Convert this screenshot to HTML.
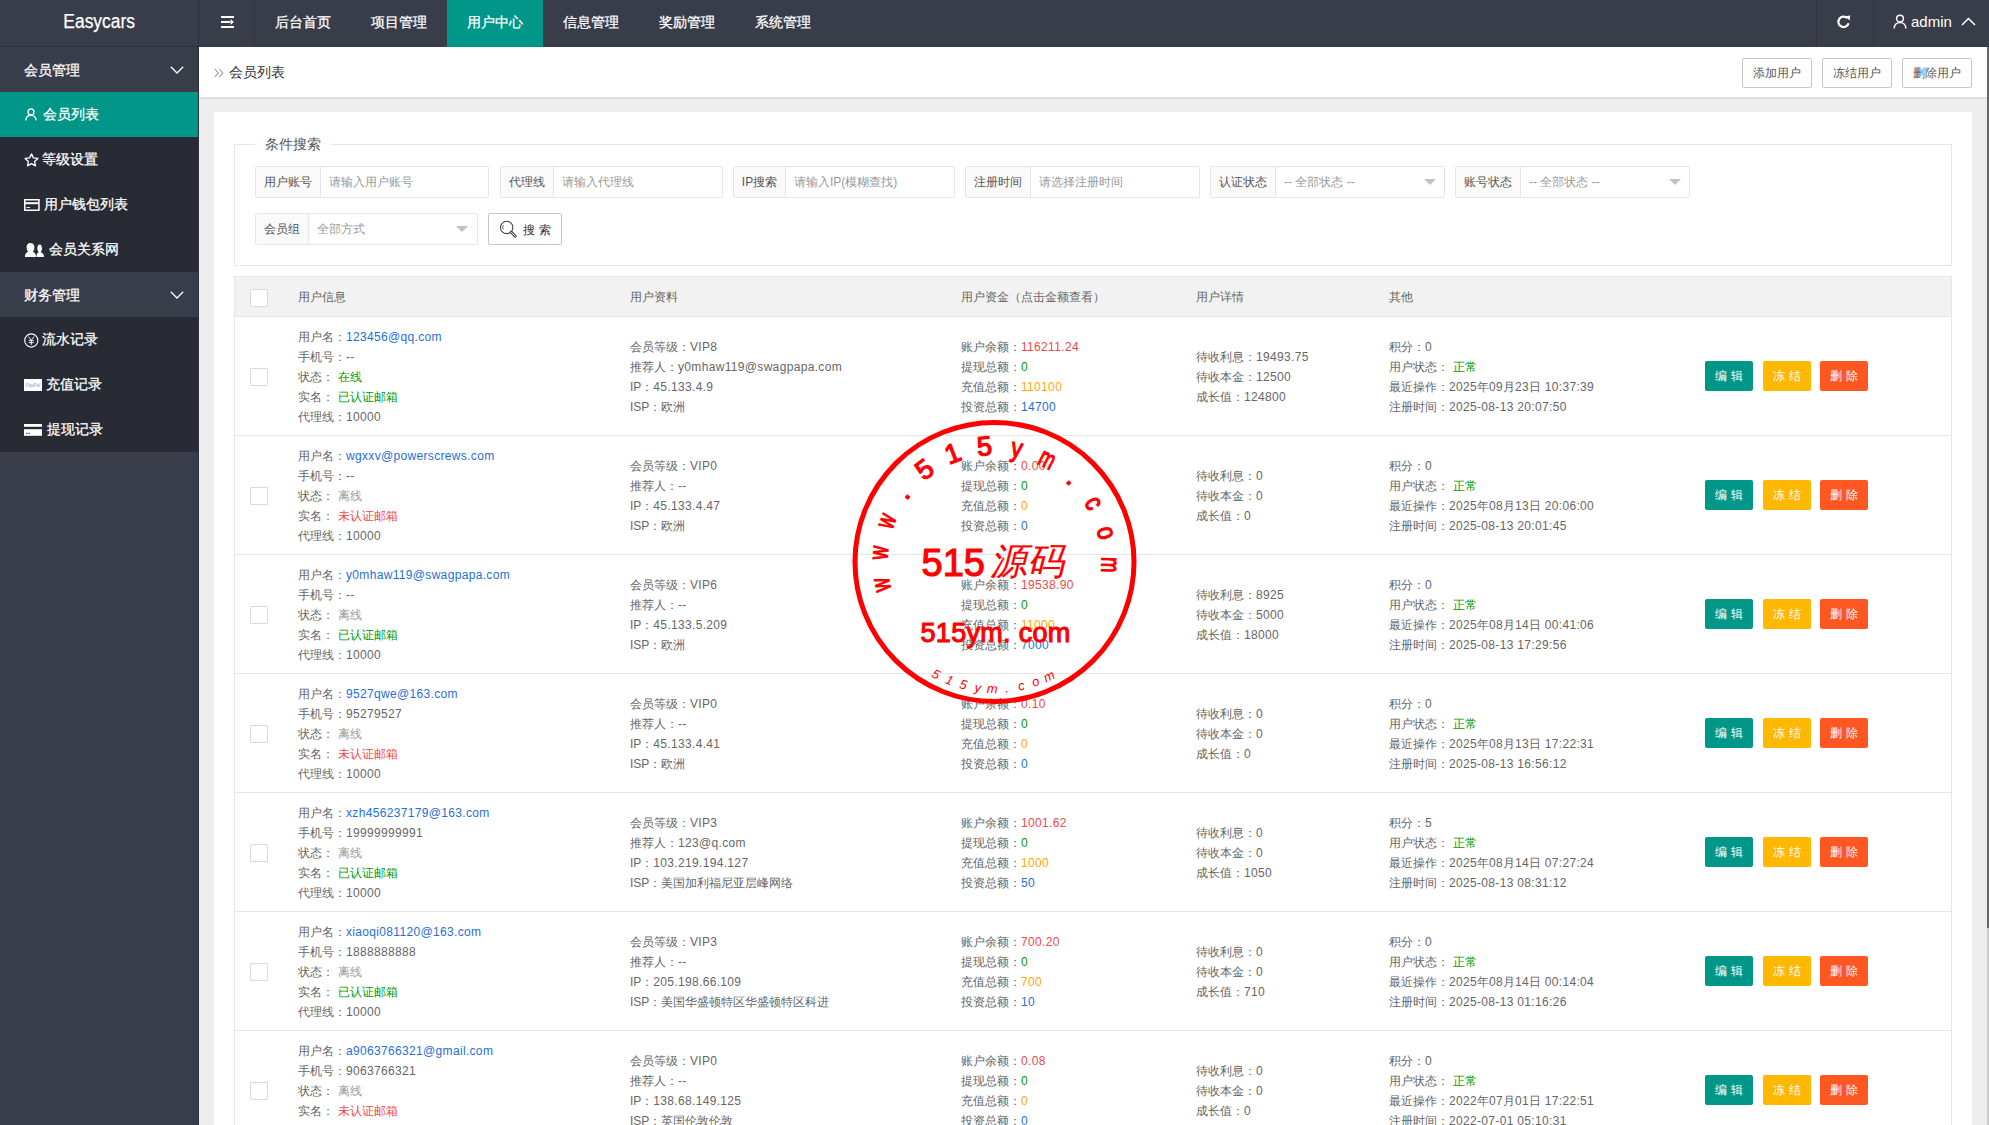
<!DOCTYPE html>
<html><head><meta charset="utf-8">
<style>
*{box-sizing:border-box;margin:0;padding:0}
html,body{width:1989px;height:1125px;overflow:hidden;background:#eee;font-family:"Liberation Sans",sans-serif;font-size:12px;color:#666}
.abs{position:absolute}
#top{left:0;top:0;width:1989px;height:47px;background:#393D49}
#logo{left:0;top:0;width:199px;height:47px;border-bottom:1px solid #2E313B;border-right:1px solid #2E313B;color:#fff;font-size:20px;text-align:center;line-height:43px}
.tsep{top:0;width:1px;height:47px;background:#30333D}
.nav{top:0;height:47px;width:96px;color:#fff;font-size:14px;text-align:center;line-height:45px}
.nav.on{background:#009688}
.nav,.mh,.mi span,#logo{-webkit-text-stroke:0.25px #fff}
#side{left:0;top:47px;width:199px;height:1078px;background:#393D49;border-right:1px solid #2E313B}
.mh{position:absolute;left:0;width:198px;height:45px;color:#fff;font-size:14px;line-height:46px;padding-left:24px;background:#393D49}
.mc{position:absolute;left:0;width:198px;background:#282B33}
.mi{height:45px;color:#fff;font-size:14px;line-height:45px;padding-left:24px;position:relative}
.mi.on{background:#009688}
.mi svg{position:absolute}
#crumb{left:199px;top:47px;width:1788px;height:50px;background:#fff;box-shadow:0 1px 3px rgba(0,0,0,.12)}
.tbtn{top:58px;width:70px;height:30px;border:1px solid #C9C9C9;border-radius:2px;background:#fff;color:#555;font-size:12px;text-align:center;line-height:28px}
#card{left:214px;top:112px;width:1758px;height:1013px;background:#fff}

#fs{left:234px;top:144px;width:1718px;height:122px;border:1px solid #E6E6E6}
#legend{left:255px;top:134px;width:76px;height:20px;background:#fff;color:#555;font-size:14px;line-height:20px;padding-left:10px}
.ig{position:absolute;height:32px;border:1px solid #E6E6E6;border-radius:2px;background:#fff}
.ig .lb{position:absolute;left:0;top:0;height:30px;background:#FAFAFA;border-right:1px solid #E6E6E6;color:#555;line-height:30px;text-align:center}
.ig .ph{position:absolute;top:0;line-height:30px;color:#999;padding-left:8px}
.ig .ar{position:absolute;top:12px;width:0;height:0;border-left:6px solid transparent;border-right:6px solid transparent;border-top:6px solid #C2C2C2}
#sbtn{left:488px;top:213px;width:74px;height:32px;border:1px solid #C9C9C9;border-radius:2px;color:#333;line-height:30px}

#thead{left:234px;top:276px;width:1718px;height:41px;background:#F2F2F2;border:1px solid #E6E6E6}
.th{position:absolute;top:10px;line-height:20px;color:#666}
.row{left:234px;width:1718px;height:119px;border-left:1px solid #E6E6E6;border-right:1px solid #E6E6E6;border-bottom:1px solid #E6E6E6;background:#fff}
.cb{position:absolute;width:18px;height:18px;border:1px solid #DADADA;border-radius:1px;background:#fff}
.col{position:absolute;line-height:20px;white-space:nowrap;color:#666}
.col b.l{font-weight:normal;letter-spacing:0.33px}
.col .b{color:#1E6FD9}.col .g{color:#009900}.col .r{color:#F04848}.col .o{color:#FFA800}.col .h{color:#999}
.sp{display:inline-block;width:4px}
.ob{position:absolute;top:44px;width:48px;height:30px;border-radius:2px;color:#fff;text-align:center;line-height:30px;letter-spacing:4px;text-indent:4px}
#stamp{font-family:"Liberation Sans",sans-serif}
#scroll{left:1987px;top:47px;width:2px;height:1078px;background:#ccc}
#thumb{left:1987px;top:47px;width:2px;height:881px;background:#666}
</style></head><body>
<!-- top bar -->
<div id="top" class="abs"></div>
<div id="logo" class="abs"><span style="display:inline-block;transform:scaleX(0.87)">Easycars</span></div>
<div class="abs tsep" style="left:254px"></div>
<svg class="abs" style="left:221px;top:16px" width="14" height="12" viewBox="0 0 14 12"><rect x="0" y="0" width="13" height="2" fill="#fff"/><rect x="0" y="5" width="9" height="2" fill="#fff"/><rect x="0" y="10" width="13" height="2" fill="#fff"/><path d="M9.5 3.2 L13 6 L9.5 8.8 Z" fill="#fff"/></svg>
<div class="abs nav" style="left:255px">后台首页</div>
<div class="abs nav" style="left:351px">项目管理</div>
<div class="abs nav on" style="left:447px">用户中心</div>
<div class="abs nav" style="left:543px">信息管理</div>
<div class="abs nav" style="left:639px">奖励管理</div>
<div class="abs nav" style="left:735px">系统管理</div>
<div class="abs tsep" style="left:1816px"></div>
<div class="abs tsep" style="left:1873px"></div>
<!-- refresh -->
<svg class="abs" style="left:1836px;top:14px" width="16" height="16" viewBox="0 0 16 16"><path d="M12.6 9.2 A5.2 5.2 0 1 1 11.2 4.1" fill="none" stroke="#fff" stroke-width="2.2"/><path d="M9.2 2.2 L14.2 1.6 L13.6 6.6 Z" fill="#fff"/></svg>
<!-- user -->
<svg class="abs" style="left:1893px;top:14px" width="14" height="15" viewBox="0 0 14 15"><circle cx="7" cy="4.6" r="3.4" fill="none" stroke="#fff" stroke-width="1.4"/><path d="M1.2 14.5 C1.2 10.5 3.8 8.6 7 8.6 C10.2 8.6 12.8 10.5 12.8 14.5" fill="none" stroke="#fff" stroke-width="1.4"/></svg>
<div class="abs" style="left:1911px;top:12px;color:#fff;font-size:15px;line-height:20px">admin</div>
<svg class="abs" style="left:1961px;top:17px" width="15" height="9" viewBox="0 0 15 9"><path d="M1 8 L7.5 1.5 L14 8" fill="none" stroke="#fff" stroke-width="1.5"/></svg>

<!-- sidebar -->
<div id="side" class="abs">
  <div class="mh" style="top:0">会员管理<svg style="position:absolute;left:170px;top:19px" width="14" height="8" viewBox="0 0 14 8"><path d="M0.8 0.8 L7 7 L13.2 0.8" fill="none" stroke="#fff" stroke-width="1.3"/></svg></div>
  <div class="mc" style="top:45px">
    <div class="mi on"><svg style="left:25px;top:16px" width="12" height="13" viewBox="0 0 12 13"><circle cx="6" cy="3.9" r="3" fill="none" stroke="#fff" stroke-width="1.3"/><path d="M0.8 12.6 C0.8 9.2 3 7.4 6 7.4 C9 7.4 11.2 9.2 11.2 12.6" fill="none" stroke="#fff" stroke-width="1.3"/></svg><span style="padding-left:19px">会员列表</span></div>
    <div class="mi"><svg style="left:24px;top:16px" width="15" height="14" viewBox="0 0 15 14"><path d="M7.5 0.9 L9.4 4.9 L13.9 5.4 L10.6 8.4 L11.5 12.9 L7.5 10.6 L3.5 12.9 L4.4 8.4 L1.1 5.4 L5.6 4.9 Z" fill="none" stroke="#fff" stroke-width="1.3" stroke-linejoin="round"/></svg><span style="padding-left:18px">等级设置</span></div>
    <div class="mi"><svg style="left:24px;top:17px" width="16" height="12" viewBox="0 0 16 12"><rect x="0.75" y="0.75" width="14.2" height="10.5" fill="none" stroke="#fff" stroke-width="1.5"/><rect x="0.75" y="3.2" width="14.2" height="2" fill="#fff"/><rect x="2.5" y="8" width="3.5" height="1" fill="#fff"/></svg><span style="padding-left:20px">用户钱包列表</span></div>
    <div class="mi"><svg style="left:25px;top:16px" width="19" height="14" viewBox="0 0 19 14"><path d="M11.5 14 L19 14 C19 11 17.5 10 15.5 9.3 C16.6 8.3 17 7 17 5.2 C17 3 16 1.4 14.6 1.4 C13.3 1.4 12.3 2.9 12.3 5 C12.3 7 12.9 8.4 13.8 9.3 C12.4 9.8 11.5 10.8 11.5 14 Z" fill="#fff"/><path d="M0 14 L11 14 C11 10.8 9.8 9.6 7.6 8.8 C8.8 7.8 9.4 6.2 9.4 4.2 C9.4 1.8 8 0 5.5 0 C3 0 1.6 1.8 1.6 4.2 C1.6 6.2 2.2 7.8 3.4 8.8 C1.2 9.6 0 10.8 0 14 Z" fill="#fff"/></svg><span style="padding-left:25px">会员关系网</span></div>
  </div>
  <div class="mh" style="top:225px">财务管理<svg style="position:absolute;left:170px;top:19px" width="14" height="8" viewBox="0 0 14 8"><path d="M0.8 0.8 L7 7 L13.2 0.8" fill="none" stroke="#fff" stroke-width="1.3"/></svg></div>
  <div class="mc" style="top:270px">
    <div class="mi"><svg style="left:24px;top:16px" width="15" height="15" viewBox="0 0 15 15"><circle cx="7.3" cy="7.5" r="6.6" fill="none" stroke="#fff" stroke-width="1.1"/><path d="M4.5 3.6 L7.3 7.2 L10.1 3.6 M7.3 7.2 L7.3 11.8 M4.8 7.6 L9.8 7.6 M4.8 9.6 L9.8 9.6" fill="none" stroke="#fff" stroke-width="0.9"/></svg><span style="padding-left:18px">流水记录</span></div>
    <div class="mi"><svg style="left:24px;top:17px" width="18" height="12" viewBox="0 0 18 12"><rect x="0" y="0" width="18" height="12" fill="#fff"/><text x="9" y="7.6" font-size="4.5" font-style="italic" text-anchor="middle" fill="#8aa0c8" font-family="Liberation Sans">PayPal</text></svg><span style="padding-left:22px">充值记录</span></div>
    <div class="mi"><svg style="left:24px;top:16px" width="18" height="13" viewBox="0 0 18 13"><rect x="0" y="1" width="18" height="2.8" fill="#fff"/><rect x="0" y="6.2" width="18" height="6.6" fill="#fff"/><rect x="2" y="9.8" width="1.5" height="1" fill="#282B33"/><rect x="4.3" y="9.8" width="1.5" height="1" fill="#282B33"/></svg><span style="padding-left:23px">提现记录</span></div>
  </div>
</div>

<!-- crumb -->
<div id="crumb" class="abs"></div>
<svg class="abs" style="left:214px;top:68px" width="10" height="10" viewBox="0 0 10 10"><path d="M0.8 1 L4.3 5 L0.8 9 M5.3 1 L8.8 5 L5.3 9" fill="none" stroke="#999" stroke-width="1.1"/></svg>
<div class="abs" style="left:229px;top:62px;color:#333;font-size:14px;line-height:20px">会员列表</div>
<div class="abs tbtn" style="left:1742px">添加用户</div>
<div class="abs tbtn" style="left:1822px">冻结用户</div>
<div class="abs tbtn" style="left:1902px">删除用户</div>

<div id="card" class="abs"></div>

<div id="fs" class="abs"></div>
<div id="legend" class="abs">条件搜索</div>
<div class="ig" style="left:255px;top:166px;width:234px"><div class="lb" style="width:65px">用户账号</div><div class="ph" style="left:65px">请输入用户账号</div></div>
<div class="ig" style="left:500px;top:166px;width:223px"><div class="lb" style="width:53px">代理线</div><div class="ph" style="left:53px">请输入代理线</div></div>
<div class="ig" style="left:733px;top:166px;width:222px"><div class="lb" style="width:52px">IP搜索</div><div class="ph" style="left:52px">请输入IP(模糊查找)</div></div>
<div class="ig" style="left:965px;top:166px;width:235px"><div class="lb" style="width:65px">注册时间</div><div class="ph" style="left:65px">请选择注册时间</div></div>
<div class="ig" style="left:1210px;top:166px;width:235px"><div class="lb" style="width:65px">认证状态</div><div class="ph" style="left:65px">-- 全部状态 --</div><div class="ar" style="left:213px"></div></div>
<div class="ig" style="left:1455px;top:166px;width:235px"><div class="lb" style="width:65px">账号状态</div><div class="ph" style="left:65px">-- 全部状态 --</div><div class="ar" style="left:213px"></div></div>
<div class="ig" style="left:255px;top:213px;width:223px"><div class="lb" style="width:53px">会员组</div><div class="ph" style="left:53px">全部方式</div><div class="ar" style="left:200px"></div></div>
<div id="sbtn" class="abs"><svg style="position:absolute;left:-1px;top:-1px" width="72" height="30" viewBox="0 0 72 30"><circle cx="18.7" cy="14.4" r="6.2" fill="none" stroke="#444" stroke-width="1.1"/><path d="M15.3 12.2 A3.8 3.8 0 0 0 15.3 16.4" fill="none" stroke="#444" stroke-width="0.9"/><path d="M23.2 19 L27.3 23.3" stroke="#444" stroke-width="2.8" stroke-linecap="round"/><path d="M23.4 19.3 L27.1 23" stroke="#fff" stroke-width="1" stroke-linecap="round"/></svg><span style="position:absolute;left:34px;top:1px;letter-spacing:4px">搜索</span></div>
<!--TABLE-->
<div class="abs" id="thead"><div class="cb" style="left:15px;top:12px"></div><div class="th" style="left:63px">用户信息</div><div class="th" style="left:395px">用户资料</div><div class="th" style="left:726px">用户资金（点击金额查看）</div><div class="th" style="left:961px">用户详情</div><div class="th" style="left:1154px">其他</div></div>
<div class="row abs" style="top:317px"><div class="cb" style="left:15px;top:51px"></div><div class="col" style="left:63px;top:10px">用户名：<span class="b"><b class="l">123456@qq.com</b></span><br>手机号：<b class="l">--</b><br>状态：<i class="sp"></i><span class="g">在线</span><br>实名：<i class="sp"></i><span class="g">已认证邮箱</span><br>代理线：<b class="l">10000</b></div><div class="col" style="left:395px;top:20px">会员等级：<b class="l">VIP8</b><br>推荐人：<b class="l">y0mhaw119@swagpapa.com</b><br>IP：<b class="l">45.133.4.9</b><br>ISP：欧洲</div><div class="col" style="left:726px;top:20px">账户余额：<span class="r"><b class="l">116211.24</b></span><br>提现总额：<span class="g"><b class="l">0</b></span><br>充值总额：<span class="o"><b class="l">110100</b></span><br>投资总额：<span class="b"><b class="l">14700</b></span></div><div class="col" style="left:961px;top:30px">待收利息：<b class="l">19493.75</b><br>待收本金：<b class="l">12500</b><br>成长值：<b class="l">124800</b></div><div class="col" style="left:1154px;top:20px">积分：<b class="l">0</b><br>用户状态：<i class="sp"></i><span class="g">正常</span><br>最近操作：<b class="l">2025</b>年<b class="l">09</b>月<b class="l">23</b>日<b class="l"> 10:37:39</b><br>注册时间：<b class="l">2025-08-13 20:07:50</b></div><div class="ob" style="left:1470px;background:#009688">编辑</div><div class="ob" style="left:1528px;background:#FFB800">冻结</div><div class="ob" style="left:1585px;background:#FF5722">删除</div></div>
<div class="row abs" style="top:436px"><div class="cb" style="left:15px;top:51px"></div><div class="col" style="left:63px;top:10px">用户名：<span class="b"><b class="l">wgxxv@powerscrews.com</b></span><br>手机号：<b class="l">--</b><br>状态：<i class="sp"></i><span class="h">离线</span><br>实名：<i class="sp"></i><span class="r">未认证邮箱</span><br>代理线：<b class="l">10000</b></div><div class="col" style="left:395px;top:20px">会员等级：<b class="l">VIP0</b><br>推荐人：<b class="l">--</b><br>IP：<b class="l">45.133.4.47</b><br>ISP：欧洲</div><div class="col" style="left:726px;top:20px">账户余额：<span class="r"><b class="l">0.00</b></span><br>提现总额：<span class="g"><b class="l">0</b></span><br>充值总额：<span class="o"><b class="l">0</b></span><br>投资总额：<span class="b"><b class="l">0</b></span></div><div class="col" style="left:961px;top:30px">待收利息：<b class="l">0</b><br>待收本金：<b class="l">0</b><br>成长值：<b class="l">0</b></div><div class="col" style="left:1154px;top:20px">积分：<b class="l">0</b><br>用户状态：<i class="sp"></i><span class="g">正常</span><br>最近操作：<b class="l">2025</b>年<b class="l">08</b>月<b class="l">13</b>日<b class="l"> 20:06:00</b><br>注册时间：<b class="l">2025-08-13 20:01:45</b></div><div class="ob" style="left:1470px;background:#009688">编辑</div><div class="ob" style="left:1528px;background:#FFB800">冻结</div><div class="ob" style="left:1585px;background:#FF5722">删除</div></div>
<div class="row abs" style="top:555px"><div class="cb" style="left:15px;top:51px"></div><div class="col" style="left:63px;top:10px">用户名：<span class="b"><b class="l">y0mhaw119@swagpapa.com</b></span><br>手机号：<b class="l">--</b><br>状态：<i class="sp"></i><span class="h">离线</span><br>实名：<i class="sp"></i><span class="g">已认证邮箱</span><br>代理线：<b class="l">10000</b></div><div class="col" style="left:395px;top:20px">会员等级：<b class="l">VIP6</b><br>推荐人：<b class="l">--</b><br>IP：<b class="l">45.133.5.209</b><br>ISP：欧洲</div><div class="col" style="left:726px;top:20px">账户余额：<span class="r"><b class="l">19538.90</b></span><br>提现总额：<span class="g"><b class="l">0</b></span><br>充值总额：<span class="o"><b class="l">11000</b></span><br>投资总额：<span class="b"><b class="l">7000</b></span></div><div class="col" style="left:961px;top:30px">待收利息：<b class="l">8925</b><br>待收本金：<b class="l">5000</b><br>成长值：<b class="l">18000</b></div><div class="col" style="left:1154px;top:20px">积分：<b class="l">0</b><br>用户状态：<i class="sp"></i><span class="g">正常</span><br>最近操作：<b class="l">2025</b>年<b class="l">08</b>月<b class="l">14</b>日<b class="l"> 00:41:06</b><br>注册时间：<b class="l">2025-08-13 17:29:56</b></div><div class="ob" style="left:1470px;background:#009688">编辑</div><div class="ob" style="left:1528px;background:#FFB800">冻结</div><div class="ob" style="left:1585px;background:#FF5722">删除</div></div>
<div class="row abs" style="top:674px"><div class="cb" style="left:15px;top:51px"></div><div class="col" style="left:63px;top:10px">用户名：<span class="b"><b class="l">9527qwe@163.com</b></span><br>手机号：<b class="l">95279527</b><br>状态：<i class="sp"></i><span class="h">离线</span><br>实名：<i class="sp"></i><span class="r">未认证邮箱</span><br>代理线：<b class="l">10000</b></div><div class="col" style="left:395px;top:20px">会员等级：<b class="l">VIP0</b><br>推荐人：<b class="l">--</b><br>IP：<b class="l">45.133.4.41</b><br>ISP：欧洲</div><div class="col" style="left:726px;top:20px">账户余额：<span class="r"><b class="l">0.10</b></span><br>提现总额：<span class="g"><b class="l">0</b></span><br>充值总额：<span class="o"><b class="l">0</b></span><br>投资总额：<span class="b"><b class="l">0</b></span></div><div class="col" style="left:961px;top:30px">待收利息：<b class="l">0</b><br>待收本金：<b class="l">0</b><br>成长值：<b class="l">0</b></div><div class="col" style="left:1154px;top:20px">积分：<b class="l">0</b><br>用户状态：<i class="sp"></i><span class="g">正常</span><br>最近操作：<b class="l">2025</b>年<b class="l">08</b>月<b class="l">13</b>日<b class="l"> 17:22:31</b><br>注册时间：<b class="l">2025-08-13 16:56:12</b></div><div class="ob" style="left:1470px;background:#009688">编辑</div><div class="ob" style="left:1528px;background:#FFB800">冻结</div><div class="ob" style="left:1585px;background:#FF5722">删除</div></div>
<div class="row abs" style="top:793px"><div class="cb" style="left:15px;top:51px"></div><div class="col" style="left:63px;top:10px">用户名：<span class="b"><b class="l">xzh456237179@163.com</b></span><br>手机号：<b class="l">19999999991</b><br>状态：<i class="sp"></i><span class="h">离线</span><br>实名：<i class="sp"></i><span class="g">已认证邮箱</span><br>代理线：<b class="l">10000</b></div><div class="col" style="left:395px;top:20px">会员等级：<b class="l">VIP3</b><br>推荐人：<b class="l">123@q.com</b><br>IP：<b class="l">103.219.194.127</b><br>ISP：美国加利福尼亚层峰网络</div><div class="col" style="left:726px;top:20px">账户余额：<span class="r"><b class="l">1001.62</b></span><br>提现总额：<span class="g"><b class="l">0</b></span><br>充值总额：<span class="o"><b class="l">1000</b></span><br>投资总额：<span class="b"><b class="l">50</b></span></div><div class="col" style="left:961px;top:30px">待收利息：<b class="l">0</b><br>待收本金：<b class="l">0</b><br>成长值：<b class="l">1050</b></div><div class="col" style="left:1154px;top:20px">积分：<b class="l">5</b><br>用户状态：<i class="sp"></i><span class="g">正常</span><br>最近操作：<b class="l">2025</b>年<b class="l">08</b>月<b class="l">14</b>日<b class="l"> 07:27:24</b><br>注册时间：<b class="l">2025-08-13 08:31:12</b></div><div class="ob" style="left:1470px;background:#009688">编辑</div><div class="ob" style="left:1528px;background:#FFB800">冻结</div><div class="ob" style="left:1585px;background:#FF5722">删除</div></div>
<div class="row abs" style="top:912px"><div class="cb" style="left:15px;top:51px"></div><div class="col" style="left:63px;top:10px">用户名：<span class="b"><b class="l">xiaoqi081120@163.com</b></span><br>手机号：<b class="l">1888888888</b><br>状态：<i class="sp"></i><span class="h">离线</span><br>实名：<i class="sp"></i><span class="g">已认证邮箱</span><br>代理线：<b class="l">10000</b></div><div class="col" style="left:395px;top:20px">会员等级：<b class="l">VIP3</b><br>推荐人：<b class="l">--</b><br>IP：<b class="l">205.198.66.109</b><br>ISP：美国华盛顿特区华盛顿特区科进</div><div class="col" style="left:726px;top:20px">账户余额：<span class="r"><b class="l">700.20</b></span><br>提现总额：<span class="g"><b class="l">0</b></span><br>充值总额：<span class="o"><b class="l">700</b></span><br>投资总额：<span class="b"><b class="l">10</b></span></div><div class="col" style="left:961px;top:30px">待收利息：<b class="l">0</b><br>待收本金：<b class="l">0</b><br>成长值：<b class="l">710</b></div><div class="col" style="left:1154px;top:20px">积分：<b class="l">0</b><br>用户状态：<i class="sp"></i><span class="g">正常</span><br>最近操作：<b class="l">2025</b>年<b class="l">08</b>月<b class="l">14</b>日<b class="l"> 00:14:04</b><br>注册时间：<b class="l">2025-08-13 01:16:26</b></div><div class="ob" style="left:1470px;background:#009688">编辑</div><div class="ob" style="left:1528px;background:#FFB800">冻结</div><div class="ob" style="left:1585px;background:#FF5722">删除</div></div>
<div class="row abs" style="top:1031px"><div class="cb" style="left:15px;top:51px"></div><div class="col" style="left:63px;top:10px">用户名：<span class="b"><b class="l">a9063766321@gmail.com</b></span><br>手机号：<b class="l">9063766321</b><br>状态：<i class="sp"></i><span class="h">离线</span><br>实名：<i class="sp"></i><span class="r">未认证邮箱</span><br>代理线：<b class="l">10000</b></div><div class="col" style="left:395px;top:20px">会员等级：<b class="l">VIP0</b><br>推荐人：<b class="l">--</b><br>IP：<b class="l">138.68.149.125</b><br>ISP：英国伦敦伦敦</div><div class="col" style="left:726px;top:20px">账户余额：<span class="r"><b class="l">0.08</b></span><br>提现总额：<span class="g"><b class="l">0</b></span><br>充值总额：<span class="o"><b class="l">0</b></span><br>投资总额：<span class="b"><b class="l">0</b></span></div><div class="col" style="left:961px;top:30px">待收利息：<b class="l">0</b><br>待收本金：<b class="l">0</b><br>成长值：<b class="l">0</b></div><div class="col" style="left:1154px;top:20px">积分：<b class="l">0</b><br>用户状态：<i class="sp"></i><span class="g">正常</span><br>最近操作：<b class="l">2022</b>年<b class="l">07</b>月<b class="l">01</b>日<b class="l"> 17:22:51</b><br>注册时间：<b class="l">2022-07-01 05:10:31</b></div><div class="ob" style="left:1470px;background:#009688">编辑</div><div class="ob" style="left:1528px;background:#FFB800">冻结</div><div class="ob" style="left:1585px;background:#FF5722">删除</div></div>
<!--/TABLE-->
<!--STAMP-->
<svg class="abs" id="stamp" style="left:850px;top:418px" width="290" height="290" viewBox="0 0 290 290">
<circle cx="144.5" cy="144" r="139.5" fill="none" stroke="#F00" stroke-width="5"/>
<g transform="rotate(-101.40 144.5 144) translate(144.5 37) scale(0.68 1)"><text x="0" y="0" text-anchor="middle" font-size="27" fill="#F00" stroke="#F00" stroke-width="1.3">w</text></g>
<g transform="rotate(-85.33 144.5 144) translate(144.5 37) scale(0.68 1)"><text x="0" y="0" text-anchor="middle" font-size="27" fill="#F00" stroke="#F00" stroke-width="1.3">w</text></g>
<g transform="rotate(-69.26 144.5 144) translate(144.5 37) scale(0.68 1)"><text x="0" y="0" text-anchor="middle" font-size="27" fill="#F00" stroke="#F00" stroke-width="1.3">w</text></g>
<g transform="rotate(-53.19 144.5 144) translate(144.5 37) scale(1.0 1)"><text x="0" y="0" text-anchor="middle" font-size="27" fill="#F00" stroke="#F00" stroke-width="1.3">.</text></g>
<g transform="rotate(-37.12 144.5 144) translate(144.5 37) scale(1.0 1)"><text x="0" y="0" text-anchor="middle" font-size="27" fill="#F00" stroke="#F00" stroke-width="1.3">5</text></g>
<g transform="rotate(-21.05 144.5 144) translate(144.5 37) scale(1.0 1)"><text x="0" y="0" text-anchor="middle" font-size="27" fill="#F00" stroke="#F00" stroke-width="1.3">1</text></g>
<g transform="rotate(-4.98 144.5 144) translate(144.5 37) scale(1.0 1)"><text x="0" y="0" text-anchor="middle" font-size="27" fill="#F00" stroke="#F00" stroke-width="1.3">5</text></g>
<g transform="rotate(11.09 144.5 144) translate(144.5 37) scale(0.82 1)"><text x="0" y="0" text-anchor="middle" font-size="27" fill="#F00" stroke="#F00" stroke-width="1.3">y</text></g>
<g transform="rotate(27.16 144.5 144) translate(144.5 37) scale(0.68 1)"><text x="0" y="0" text-anchor="middle" font-size="27" fill="#F00" stroke="#F00" stroke-width="1.3">m</text></g>
<g transform="rotate(43.23 144.5 144) translate(144.5 37) scale(1.0 1)"><text x="0" y="0" text-anchor="middle" font-size="27" fill="#F00" stroke="#F00" stroke-width="1.3">.</text></g>
<g transform="rotate(59.30 144.5 144) translate(144.5 37) scale(0.82 1)"><text x="0" y="0" text-anchor="middle" font-size="27" fill="#F00" stroke="#F00" stroke-width="1.3">c</text></g>
<g transform="rotate(75.37 144.5 144) translate(144.5 37) scale(0.82 1)"><text x="0" y="0" text-anchor="middle" font-size="27" fill="#F00" stroke="#F00" stroke-width="1.3">o</text></g>
<g transform="rotate(91.44 144.5 144) translate(144.5 37) scale(0.68 1)"><text x="0" y="0" text-anchor="middle" font-size="27" fill="#F00" stroke="#F00" stroke-width="1.3">m</text></g>
<g transform="rotate(27.50 144.5 144) translate(144.5 275)"><text x="0" y="0" text-anchor="middle" font-size="13" font-style="italic" fill="#F00">5</text></g>
<g transform="rotate(20.88 144.5 144) translate(144.5 275)"><text x="0" y="0" text-anchor="middle" font-size="13" font-style="italic" fill="#F00">1</text></g>
<g transform="rotate(14.25 144.5 144) translate(144.5 275)"><text x="0" y="0" text-anchor="middle" font-size="13" font-style="italic" fill="#F00">5</text></g>
<g transform="rotate(7.62 144.5 144) translate(144.5 275)"><text x="0" y="0" text-anchor="middle" font-size="13" font-style="italic" fill="#F00">y</text></g>
<g transform="rotate(1.00 144.5 144) translate(144.5 275)"><text x="0" y="0" text-anchor="middle" font-size="13" font-style="italic" fill="#F00">m</text></g>
<g transform="rotate(-5.62 144.5 144) translate(144.5 275)"><text x="0" y="0" text-anchor="middle" font-size="13" font-style="italic" fill="#F00">.</text></g>
<g transform="rotate(-12.25 144.5 144) translate(144.5 275)"><text x="0" y="0" text-anchor="middle" font-size="13" font-style="italic" fill="#F00">c</text></g>
<g transform="rotate(-18.88 144.5 144) translate(144.5 275)"><text x="0" y="0" text-anchor="middle" font-size="13" font-style="italic" fill="#F00">o</text></g>
<g transform="rotate(-25.50 144.5 144) translate(144.5 275)"><text x="0" y="0" text-anchor="middle" font-size="13" font-style="italic" fill="#F00">m</text></g>
<text x="71.5" y="157.60000000000002" font-size="38" fill="#F00" stroke="#F00" stroke-width="1.2">515</text>
<text x="140" y="156" font-size="37" font-style="italic" fill="#F00" stroke="#F00" stroke-width="0.2" font-family="Liberation Serif">源码</text>
<text x="70.5" y="224" font-size="27" fill="#F00" stroke="#F00" stroke-width="1.1" letter-spacing="0.3">515ym. com</text>
</svg>
<!--/STAMP-->
<div id="scroll" class="abs"></div>
<div id="thumb" class="abs"></div>
</body></html>
